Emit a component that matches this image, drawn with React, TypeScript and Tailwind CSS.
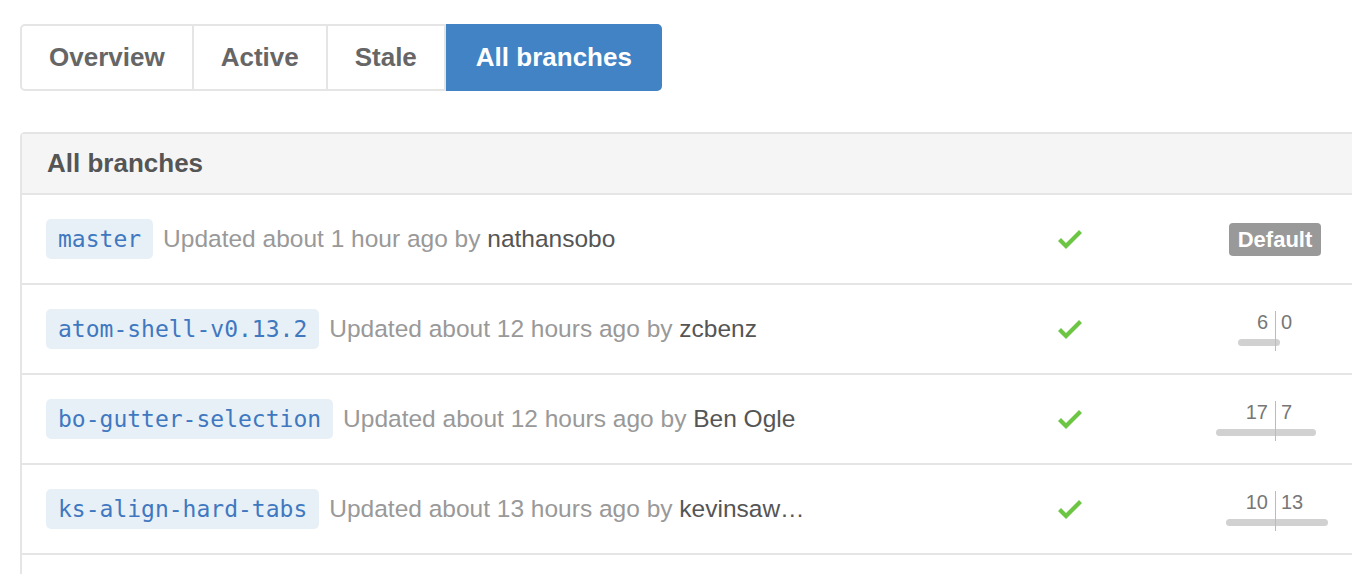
import type { ReactNode } from 'react'

type Branch = {
  name: string
  author: string
  time: string
  isDefault?: boolean
  behind?: number
  ahead?: number
  behindW?: number
  aheadW?: number
}

const branches: Branch[] = [
  { name: 'master', time: 'about 1 hour ago', author: 'nathansobo', isDefault: true },
  { name: 'atom-shell-v0.13.2', time: 'about 12 hours ago', author: 'zcbenz', behind: 6, ahead: 0, behindW: 37, aheadW: 5 },
  { name: 'bo-gutter-selection', time: 'about 12 hours ago', author: 'Ben Ogle', behind: 17, ahead: 7, behindW: 59, aheadW: 41 },
  { name: 'ks-align-hard-tabs', time: 'about 13 hours ago', author: 'kevinsaw…', behind: 10, ahead: 13, behindW: 49, aheadW: 53 },
]

const tabs = ['Overview', 'Active', 'Stale', 'All branches']

function Check() {
  return (
    <svg width="24" height="32" viewBox="0 0 12 16" fill="#6cc644">
      <path d="M12 5l-8 8-4-4 1.5-1.5L4 10l6.5-6.5L12 5z" />
    </svg>
  )
}

function AheadBehind({ b }: { b: Branch }) {
  return (
    <div className="relative flex w-[150px] h-[40px]">
      {/* behind */}
      <div className="flex flex-1 flex-col items-end">
        <span className="pr-[7px] text-[20px] leading-[26px] text-[#777]">{b.behind}</span>
        <div className="mt-[4px] h-[7px] rounded-l-full bg-[#d1d1d1]" style={{ width: b.behindW }} />
      </div>
      {/* ahead */}
      <div className="flex flex-1 flex-col items-start">
        <span className="pl-[6px] text-[20px] leading-[26px] text-[#777]">{b.ahead}</span>
        <div className="mt-[4px] h-[7px] rounded-r-full bg-[#d1d1d1]" style={{ width: b.aheadW }} />
      </div>
      <div className="absolute left-[75px] top-[2px] h-[40px] w-px bg-[#bbb]" />
    </div>
  )
}

function Row({ b }: { b: Branch }) {
  let right: ReactNode
  if (b.isDefault) {
    right = (
      <span className="rounded-[4px] bg-[#999] px-[9px] py-[2px] text-[22px] font-bold leading-[29px] text-white">
        Default
      </span>
    )
  } else {
    right = <AheadBehind b={b} />
  }
  return (
    <div className="flex h-[90px] items-center border-b-2 border-[#e5e5e5] pl-[24px]">
      <div className="flex flex-1 items-center min-w-0">
        <span
          className="rounded-[5px] bg-[#e8f0f7] px-[12px] text-[23px] leading-[40px] text-[#4078c0]"
          style={{ fontFamily: '"DejaVu Sans Mono", "Liberation Mono", monospace' }}
        >
          {b.name}
        </span>
        <span className="ml-[10px] text-[24.5px] text-[#999] whitespace-nowrap">
          Updated {b.time} by <span className="text-[#555]">{b.author}</span>
        </span>
      </div>
      <div className="flex w-[80px] justify-center">
        <Check />
      </div>
      <div className="ml-[90px] mr-[12px] flex w-[150px] justify-center">{right}</div>
    </div>
  )
}

export default function App() {
  return (
    <div className="h-[574px] overflow-hidden bg-white pl-[20px] pt-[24px]" style={{ fontFamily: '"Liberation Sans", Arial, sans-serif' }}>
      {/* tabs */}
      <div className="flex h-[67px] w-fit rounded-[5px] border-2 border-[#e5e5e5]">
        {tabs.map((t, i) => {
          const active = i === tabs.length - 1
          return (
            <div
              key={t}
              className={
                active
                  ? '-my-[2px] -mr-[2px] flex items-center rounded-r-[5px] bg-[#4183c4] px-[30px] text-[26px] font-bold text-white'
                  : 'flex items-center border-r-2 border-[#e5e5e5] px-[27px] text-[26px] font-bold text-[#666]'
              }
            >
              {t}
            </div>
          )
        })}
      </div>

      {/* branch list */}
      <div className="mt-[41px] -mr-[10px] rounded-tl-[5px] border-l-2 border-t-2 border-[#e5e5e5]">
        <div className="flex h-[61px] items-center border-b-2 border-[#e5e5e5] bg-[#f5f5f5] pl-[25px] text-[26px] font-bold text-[#555]">
          All branches
        </div>
        {branches.map(b => (
          <Row key={b.name} b={b} />
        ))}
        {/* list continues below the fold */}
        <div className="h-[60px]" />
      </div>
    </div>
  )
}
